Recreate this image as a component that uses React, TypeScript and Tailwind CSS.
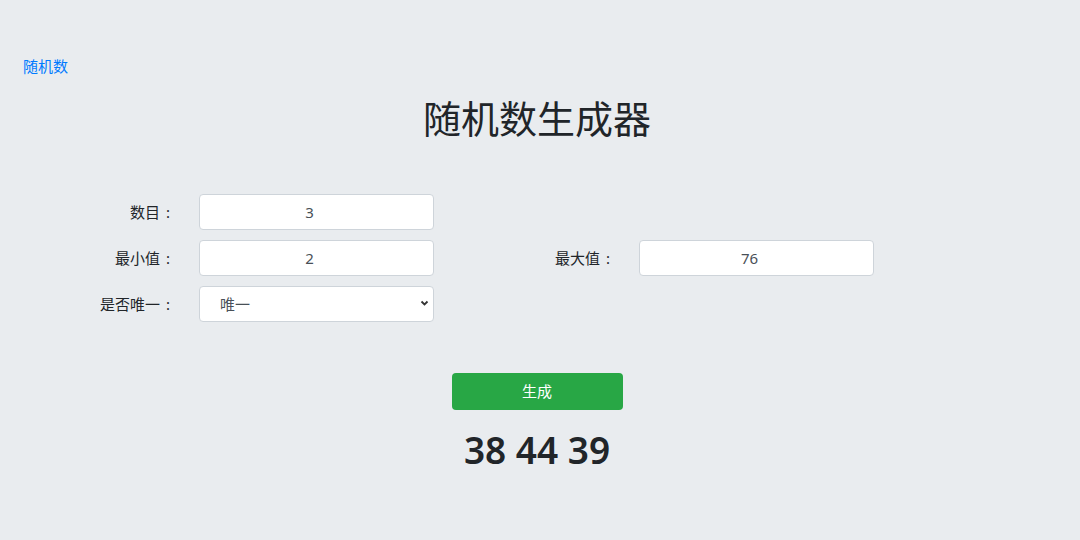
import React from 'react';

const font = { fontFamily: '"Noto Sans", "Noto Sans CJK SC", sans-serif' };

function Label({ text }: { text: string }) {
  return (
    <label className="w-[152px] flex justify-end items-center text-[15px] text-[#212529]">
      <span>{text}</span>
      <span className="ml-[6px] mr-[2px]">:</span>
    </label>
  );
}

function Field({ label, value }: { label: string; value: string }) {
  return (
    <div className="flex items-center">
      <Label text={label} />
      <input
        type="text"
        defaultValue={value}
        className="ml-[27px] w-[235px] h-[36px] rounded-[4px] border border-[#ced4da] bg-white pr-[14px] text-center text-[15px] text-[#495057] outline-none"
      />
    </div>
  );
}

export default function App() {
  return (
    <div className="min-h-[540px] w-full bg-[#e9ecef]" style={font}>
      <div className="pt-[54px] pl-[23px]">
        <a href="#" className="text-[15px] leading-[24px] text-[#007bff]">随机数</a>
      </div>

      <h1 className="mt-[13px] pr-[6px] text-center text-[38px] leading-[54px] text-[#212529] font-normal">随机数生成器</h1>

      <form className="mt-[49px] pl-[20px] flex flex-col gap-[10px]">
        <Field label="数目" value="3" />
        <div className="flex">
          <div className="w-[440px]">
            <Field label="最小值" value="2" />
          </div>
          <Field label="最大值" value="76" />
        </div>
        <div className="flex items-center">
          <Label text="是否唯一" />
          <div className="relative ml-[27px] w-[235px] h-[36px]">
            <select className="appearance-none w-full h-full rounded-[4px] border border-[#ced4da] bg-white pl-[20px] text-[15px] text-[#495057] outline-none">
              <option>唯一</option>
              <option>不唯一</option>
            </select>
            <svg className="pointer-events-none absolute right-[5px] top-[14px]" width="9" height="7" viewBox="0 0 9 7">
              <path d="M1.5 1.5 L4.5 4.5 L7.5 1.5" fill="none" stroke="#333" strokeWidth="1.8" />
            </svg>
          </div>
        </div>
      </form>

      <div className="mt-[51px] pr-[6px] flex flex-col items-center">
        <button
          type="button"
          className="w-[171px] h-[37px] rounded-[4px] bg-[#28a745] text-white text-[15px]"
        >
          生成
        </button>
        <div className="mt-[14px] text-[37px] font-semibold leading-[52px] text-[#212529]">38 44 39</div>
      </div>
    </div>
  );
}
